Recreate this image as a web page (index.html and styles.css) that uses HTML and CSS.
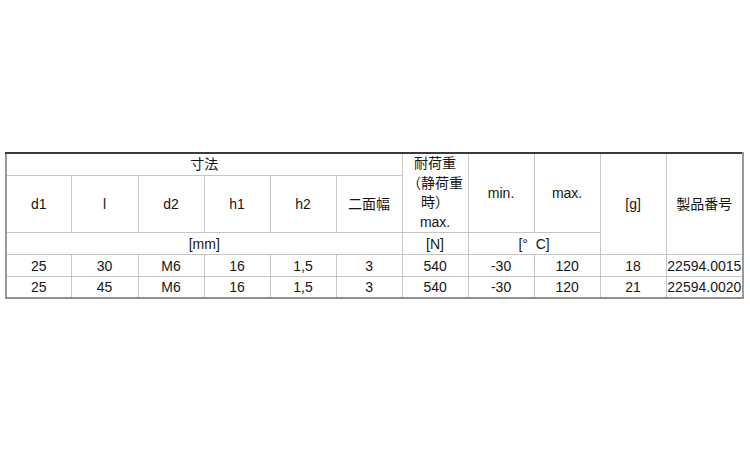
FILE: index.html
```html
<!DOCTYPE html>
<html lang="ja">
<head>
<meta charset="utf-8">
<link rel="stylesheet" href="styles.css">
</head>
<body>
<div class="page">
<table class="spec">
<colgroup>
<col class="c1"><col class="c2"><col class="cn"><col class="cn"><col class="cn"><col class="cn"><col class="cn"><col class="cn"><col class="cn"><col class="cn"><col class="clast">
</colgroup>
<tr class="r1">
<td colspan="6">寸法</td>
<td rowspan="2" class="load">耐荷重<br>（静荷重<br>時）<br>max.</td>
<td rowspan="2">min.</td>
<td rowspan="2">max.</td>
<td rowspan="3">[g]</td>
<td rowspan="3">製品番号</td>
</tr>
<tr class="r2">
<td>d1</td><td>l</td><td>d2</td><td>h1</td><td>h2</td><td>二面幅</td>
</tr>
<tr class="r3">
<td colspan="6">[mm]</td>
<td>[N]</td>
<td colspan="2">[°&nbsp;&nbsp;C]</td>
</tr>
<tr class="r4">
<td>25</td><td>30</td><td>M6</td><td>16</td><td>1,5</td><td>3</td><td>540</td><td>-30</td><td>120</td><td>18</td><td>22594.0015</td>
</tr>
<tr class="r5">
<td>25</td><td>45</td><td>M6</td><td>16</td><td>1,5</td><td>3</td><td>540</td><td>-30</td><td>120</td><td>21</td><td>22594.0020</td>
</tr>
</table>
</div>
</body>
</html>
```
FILE: styles.css
```css
html, body {
  margin: 0;
  padding: 0;
  background: #ffffff;
}
.page {
  padding: 152px 0 0 5px;
}
.spec {
  border-collapse: collapse;
  table-layout: fixed;
  width: 737px;
  font-family: "Liberation Sans", Arial, "Noto Sans CJK JP", sans-serif;
  font-size: 14px;
  color: #161616;
  border-top: 2px solid #3a3a3a;
  border-left: 2px solid #9a9a9a;
  border-right: 2px solid #9a9a9a;
  border-bottom: 2px solid #8e8e8e;
}
.c1 { width: 65px; }
.c2 { width: 67px; }
.cn { width: 66px; }
.clast { width: 77px; }
.spec td {
  border: 1px solid #c6c6c6;
  padding: 0;
  text-align: center;
  vertical-align: middle;
  white-space: nowrap;
  line-height: 16px;
}
.spec td.load {
  line-height: 19.5px;
}
.r1 { height: 22px; }
.r2 { height: 56px; }
.r3 { height: 22px; }
.r4 { height: 22px; }
.r5 { height: 21px; }
```
